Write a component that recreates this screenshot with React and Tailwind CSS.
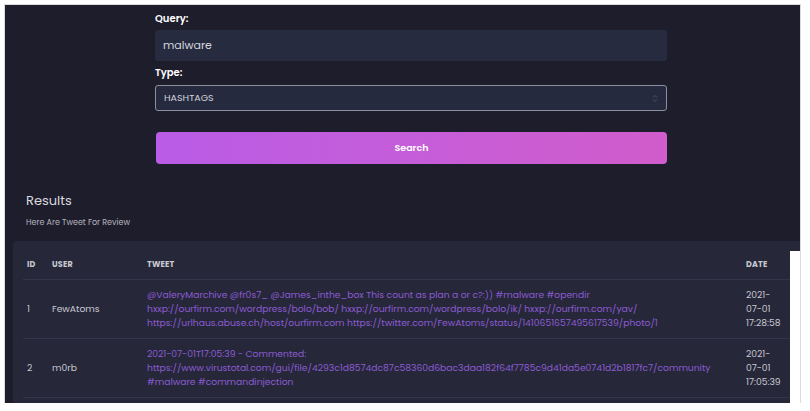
import React from "react";

const rows = [
    {
        id: 1,
        user: "FewAtoms",
        tweet: [
            "@ValeryMarchive @fr0s7_ @James_inthe_box This count as plan a or c?:)) #malware #opendir",
            "hxxp://ourfirm.com/wordpress/bolo/bob/ hxxp://ourfirm.com/wordpress/bolo/ik/ hxxp://ourfirm.com/yav/",
            "https://urlhaus.abuse.ch/host/ourfirm.com https://twitter.com/FewAtoms/status/1410651657495617539/photo/1",
        ],
        date: ["2021-", "07-01", "17:28:58"],
    },
    {
        id: 2,
        user: "m0rb",
        tweet: [
            "2021-07-01T17:05:39 - Commented:",
            "https://www.virustotal.com/gui/file/4293c1d8574dc87c58360d6bac3daa182f64f7785c9d41da5e0741d2b1817fc7/community",
            "#malware #commandinjection",
        ],
        date: ["2021-", "07-01", "17:05:39"],
    },
];

const App = () => {
    return (
        <div className="w-[810px] h-[411px] bg-white pt-[4px] pl-[4px] overflow-hidden font-['Poppins','Inter',sans-serif]">
            <div className="w-[797px] h-[399px] bg-[#1e1d2c] border-t border-l border-r border-[#d9d9de] flex flex-col overflow-hidden">
                {/* Search form */}
                <div className="ml-[150px] w-[512px] pt-[7px] flex flex-col">
                    <label className="text-[10px] font-semibold text-white leading-[14px]">Query:</label>
                    <div className="mt-[4px] h-[31px] rounded-[3px] bg-[#262b40] flex items-center px-[8px] text-[11px] text-[#d4d4dc]">
                        malware
                    </div>
                    <label className="mt-[5px] text-[10px] font-semibold text-white leading-[14px]">Type:</label>
                    <div className="mt-[5px] h-[26px] rounded-[3px] bg-[#252a3f] border border-[#8b8f9f] flex items-center justify-between pl-[8px] pr-[8px] text-[9.5px] text-[#d4d4dc]">
                        <span>HASHTAGS</span>
                        <svg width="6" height="9" viewBox="0 0 6 9" className="text-[#4f5468]">
                            <path d="M1 3.5 L3 1.5 L5 3.5 M1 5.5 L3 7.5 L5 5.5" stroke="currentColor" strokeWidth="1" fill="none" />
                        </svg>
                    </div>
                    <button className="mt-[21px] ml-[1px] h-[32px] rounded-[4px] bg-gradient-to-r from-[#b95ce6] to-[#d15ccb] text-white text-[9.5px] font-semibold">
                        Search
                    </button>
                </div>

                {/* Results heading */}
                <div className="pl-[21px] mt-[28px]">
                    <div className="text-[13px] text-[#d8d8de] leading-[18px]">Results</div>
                    <div className="mt-[7px] text-[8px] text-[#b4b4bc] leading-[12px]">Here Are Tweet For Review</div>
                </div>

                {/* Table card */}
                <div className="mt-[12px] ml-[8px] flex-1 bg-[#262739] rounded-tl-[4px] flex pl-[10px] pt-[10px]">
                    <div className="flex-1">
                        <table className="w-full table-fixed text-left">
                            <colgroup>
                                <col className="w-[25px]" />
                                <col className="w-[95px]" />
                                <col className="w-[599px]" />
                                <col />
                            </colgroup>
                            <thead>
                                <tr className="h-[28px] border-b border-[#34354a] text-[8px] font-bold text-[#c9c9d2] uppercase tracking-wide">
                                    <th className="pl-[4px] font-bold">ID</th>
                                    <th className="pl-[4px] font-bold">User</th>
                                    <th className="pl-[4px] font-bold">Tweet</th>
                                    <th className="pl-[4px] font-bold">Date</th>
                                </tr>
                            </thead>
                            <tbody>
                                {rows.map((row) => (
                                    <tr key={row.id} className="border-b border-[#34354a] text-[9.2px] leading-[14px]">
                                        <td className="pl-[4px] py-[8px] text-[#c9c9d2]">{row.id}</td>
                                        <td className="pl-[4px] py-[8px] text-[#c9c9d2]">{row.user}</td>
                                        <td className="pl-[4px] py-[8px] text-[#8c5cd3] whitespace-nowrap">
                                            {row.tweet.map((line, i) => (
                                                <div key={i}>{line}</div>
                                            ))}
                                        </td>
                                        <td className="pl-[4px] py-[8px] text-[#c9c9d2] whitespace-nowrap">
                                            {row.date.map((line, i) => (
                                                <div key={i}>{line}</div>
                                            ))}
                                        </td>
                                    </tr>
                                ))}
                            </tbody>
                        </table>
                    </div>
                    <div className="w-[10px] bg-white" />
                </div>
            </div>
        </div>
    );
};

export default App;
